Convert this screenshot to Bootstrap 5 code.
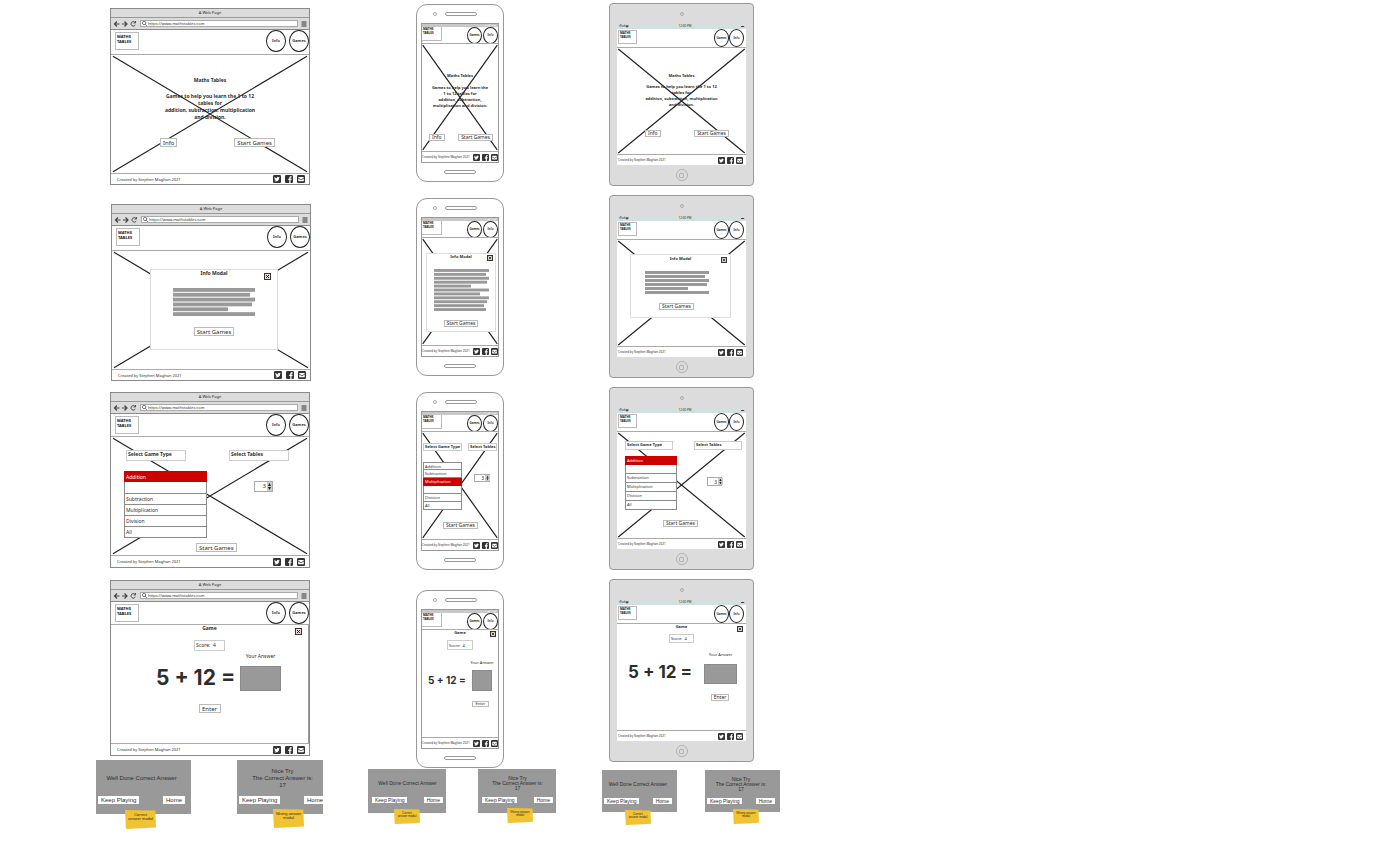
<!DOCTYPE html>
<html lang="en">
<head>
<meta charset="utf-8">
<meta name="viewport" content="width=device-width, initial-scale=1">
<title>Maths Tables wireframes</title>
<link rel="stylesheet" href="https://cdn.jsdelivr.net/npm/bootstrap@5.3.0/dist/css/bootstrap.min.css">
<style>
  body { font-family: "Noto Sans", "Liberation Sans", sans-serif; color: #2d2d2d; background: #fff; }
  .board { padding-left: 96px; gap: 45px; }
  .lane { flex: none; }
  .lane-web { width: 227px; padding-top: 8px; }
  .lane-phone { width: 188px; padding-top: 4px; }
  .lane-tablet { width: 179px; padding: 3px 0 0 1px; }

  /* Sizes shared by the parts of one device */
  .lane-web { --fs-btn: 6px; --fs-text: 5px; --lh: 7px; --fs-foot: 4px; --btn-h: 9px; --icon: 8px; --fs-msg: 6px; }
  .lane-phone { --fs-btn: 5px; --fs-text: 4px; --lh: 6px; --fs-foot: 3px; --btn-h: 7px; --icon: 7px; --fs-msg: 5px; }
  .lane-tablet { --fs-btn: 5px; --fs-text: 4px; --lh: 6px; --fs-foot: 3px; --btn-h: 7px; --icon: 7px; --fs-msg: 5px; }

  /* Device frames */
  .frame-web { width: 200px; margin-left: 14px; border: 1px solid #8a8a8a; }
  .frame-web + .frame-web { margin-top: 12px; }
  .frame-web.is-info { margin-top: 19px; margin-left: 15px; }
  .frame-web.is-pick { margin-top: 11px; }
  .frame-phone { width: 88px; margin-left: 48px; border: 1px solid #999; border-radius: 11px; padding: 0 4px; background: #fff; }
  .frame-phone + .frame-phone { margin-top: 16px; }
  .frame-phone.is-play { margin-top: 20px; }
  .frame-tablet { width: 145px; margin-left: 7px; border: 1px solid #999; border-radius: 4px; padding: 0 7px; background: #dcdcdc; }
  .frame-tablet + .frame-tablet { margin-top: 9px; }
  .bezel { height: 18px; gap: 8px; }
  .frame-tablet .bezel { height: 20px; }
  .cam { width: 4px; height: 4px; border: 1px solid #aaa; border-radius: 50%; }
  .slot { width: 32px; height: 4px; border: 1px solid #999; border-radius: 2px; }
  .frame-phone .bezel-top { padding-left: 12px; }
  .home-key { width: 12px; height: 12px; border: 1px solid #b4b4b4; border-radius: 50%; }
  .home-key i { width: 5px; height: 5px; border: 1px solid #b4b4b4; border-radius: 1px; }
  .frame-phone .view { border: 1px solid #999; }
  .title-strip { height: 9px; background: #dcdcdc; border-bottom: 1px solid #999; font-size: 4px; line-height: 8px; }
  .tool-strip { height: 12px; background: #dcdcdc; border-bottom: 1px solid #8a8a8a; padding: 0 2px; gap: 3px; }
  .address { height: 7px; border: 1px solid #aaa; background: #fff; gap: 1px; padding-left: 1px; min-width: 0; }
  .address input { border: 0; padding: 0; width: 100%; font-size: 4px; line-height: 5px; height: 5px; color: inherit; background: none; }
  .frame-phone .status { height: 3px; background: #c8c8c8; color: #fff; font-size: 2px; line-height: 3px; padding-right: 2px; }
  .frame-tablet .status { height: 5px; background: #d5dfe2; font-size: 3px; line-height: 5px; padding: 0 2px; }

  .page { background: #fff; }
  .top-row { height: 24px; padding: 2px 0 0 4px; }
  .is-pick .top-row, .is-play .top-row { height: 22px; }
  .frame-phone .top-row.top-row { height: 16px; padding: 0; }
  .frame-tablet .top-row.top-row { height: 18px; padding: 1px 2px 0 1px; }
  .brand-box { width: 24px; height: 18px; border: 1px solid #bbb; padding: 1px; font-size: 4px; line-height: 5px; font-weight: 700; color: #111; text-decoration: none; }
  .frame-phone .brand-box { width: 20px; height: 14px; border-width: 0 1px 1px 0; font-size: 3px; line-height: 4px; padding: 0 1px; }
  .frame-tablet .brand-box { width: 19px; height: 14px; font-size: 3px; line-height: 4px; padding: 0 1px; }
  .round-links { gap: 3px; }
  .frame-phone .round-links { gap: 1px; }
  .frame-tablet .round-links { gap: 0; }
  .round-link { width: 20px; height: 22px; margin-top: -2px; border: 1px solid #222; border-radius: 50%; background: #fff; color: #111; font-size: 4px; font-weight: 600; text-decoration: none; }
  .frame-phone .round-link { width: 15px; height: 17px; margin-top: 0; font-size: 3px; }
  .frame-tablet .round-link { width: 15px; height: 18px; margin-top: -1px; font-size: 3px; }

  .stage { height: 120px; border: solid #aaa; border-width: 1px 0; }
  .frame-phone .stage { height: 109px; }
  .frame-tablet .stage { height: 108px; }
  .cross { inset: 0; pointer-events: none; }
  .over { position: relative; }
  .copy, .heading { font-size: var(--fs-text); line-height: var(--lh); font-weight: 700; text-align: center; margin: 0; }
  .wf-btn { height: var(--btn-h); padding: 0 2px; border: 1px solid #bbb; border-radius: 0; background: #fff; color: #2d2d2d; font-size: var(--fs-btn); line-height: 1; white-space: nowrap; display: flex; align-items: center; justify-content: center; }
  .foot-row { height: 10px; padding: 0 4px 0 6px; font-size: var(--fs-foot); line-height: 5px; }
  .frame-web.is-pick .foot-row, .frame-web.is-play .foot-row { height: 11px; }
  .frame-phone .foot-row { padding: 0; white-space: nowrap; }
  .foot-links { gap: 4px; }
  .frame-phone .foot-links, .frame-tablet .foot-links { gap: 2px; }
  .frame-tablet .foot-row { padding: 0 3px 0 1px; }
  .foot-links a { color: #333; display: flex; }
  .foot-links svg { width: var(--icon); height: var(--icon); }

  /* Home */
  .is-home h2 { padding-top: 22px; }
  .is-home p { margin-top: 9px; }
  .choices { margin-top: 17px; padding: 0 34px 0 49px; }
  .lane-phone .is-home h2 { padding-top: 29px; }
  .lane-phone .is-home p { margin-top: 6px; }
  .lane-phone .choices { margin-top: 25px; padding: 0 5px 0 7px; }
  .lane-tablet .is-home h2 { padding-top: 25px; }
  .lane-tablet .is-home p { margin-top: 5px; }
  .lane-tablet .choices { margin-top: 22px; padding: 0 17px 0 28px; }

  /* Info dialog */
  .dialog { margin: 18px 0 0 38px; width: 128px; height: 81px; border: 1px solid #ddd; background: #fff; gap: 11px; }
  .lane-phone .dialog { margin: 15px 0 0 4px; width: 70px; height: 79px; gap: 9px; }
  .lane-tablet .dialog { margin: 14px 0 0 13px; width: 101px; height: 64px; gap: 9px; padding-top: 1px; }
  .text-lines { width: 82px; height: 28px; }
  .lane-phone .text-lines { width: 55px; height: 42px; }
  .lane-tablet .text-lines { width: 64px; height: 23px; margin-left: -8px; }
  .lane-tablet .dialog .wf-btn { margin-left: -8px; }
  .close-key { position: absolute; top: 3px; right: 6px; width: 7px; height: 7px; padding: 0; border: 1px solid #333; background: #f1dcdc; display: flex; }
  .close-key svg { width: 5px; height: 5px; }
  .lane-phone .close-key { top: 1px; right: 2px; width: 6px; height: 6px; background: #e6d9c4; }
  .lane-tablet .close-key { top: 2px; right: 3px; width: 6px; height: 6px; background: #d8dde6; }
  .lane-phone .close-key svg, .lane-tablet .close-key svg { width: 4px; height: 4px; }

  /* Game picker */
  .picker { padding: 13px 20px 0 13px; }
  .pick-label { width: 60px; height: 11px; border: 1px solid #ccc; background: #fff; padding-left: 1px; font-size: var(--fs-text); line-height: 7px; font-weight: 700; white-space: nowrap; }
  .kinds { width: 83px; margin-top: 10px; border-radius: 0; font-size: var(--fs-text); }
  .kinds .list-group-item { height: 11px; padding: 0 1px; border: 1px solid #8a8a8a; border-top: 0; line-height: 10px; color: #2d2d2d; background: #fff; font-size: var(--fs-text); text-align: left; }
  .kinds .list-group-item:first-child { border-top: 1px solid #8a8a8a; }
  .kinds .list-group-item.active { background: #c00; border-color: #c00; color: #fff; margin: 0; }
  .kinds .list-group-item.spacer { height: 12px; }
  .type-col .pick-label { margin-left: 2px; }
  .stepper { width: 19px; height: 11px; border: 1px solid #aaa; background: #fff; margin: 20px 0 0 25px; }
  .stepper input { width: 12px; padding: 0 1px; border: 0; background: none; font-size: 6px; line-height: 9px; text-align: right; color: inherit; }
  .stepper button { width: 5px; border: 0; padding: 0; background: #ccc; display: flex; }
  .stepper svg { width: 5px; height: 100%; }
  .pick-start { margin: 5px auto 0 85px; }
  .lane-phone .picker { padding: 11px 1px 0 1px; }
  .lane-phone .pick-label { width: 39px; height: 8px; line-height: 6px; }
  .lane-phone .table-col .pick-label { width: 29px; }
  .lane-phone .kinds { width: 39px; margin-top: 11px; }
  .lane-phone .kinds .list-group-item.list-group-item { height: 8px; line-height: 7px; }
  .lane-phone .type-col .pick-label, .lane-tablet .type-col .pick-label { margin-left: 0; }
  .lane-phone .stepper { width: 16px; height: 8px; margin: 23px 0 0 6px; }
  .lane-phone .stepper input, .lane-tablet .stepper input { font-size: 5px; line-height: 6px; width: 10px; }
  .lane-phone .pick-start { margin: 12px auto 0 21px; }
  .lane-tablet .picker { padding: 9px 4px 0 8px; }
  .lane-tablet .pick-label { width: 48px; height: 9px; line-height: 6px; }
  .lane-tablet .kinds { width: 52px; margin-top: 6px; }
  .lane-tablet .kinds .list-group-item.list-group-item { height: 9px; line-height: 8px; }
  .lane-tablet .stepper { width: 15px; height: 9px; margin: 27px 0 0 13px; }
  .lane-tablet .pick-start { margin: 10px auto 0 46px; }

  /* Play */
  .score { width: 31px; height: 11px; margin: 8px auto 0; border: 1px solid #ccc; padding-left: 1px; font-size: var(--fs-text); line-height: 9px; white-space: pre; }
  .sum-row { margin-top: 2px; padding: 0 27px 0 45px; }
  .sum { font-family: Inter, sans-serif; font-size: 21px; line-height: 26px; font-weight: 700; white-space: nowrap; }
  .answer-col { gap: 6px; width: 41px; }
  .answer-col label { font-size: var(--fs-text); line-height: var(--lh); white-space: nowrap; }
  .answer-col input { width: 100%; height: 25px; border: 1px solid #8a8a8a; background: #999; border-radius: 0; padding: 2px; }
  .enter { margin: 13px auto 0; width: 22px; }
  .frame-web.is-play .stage { border-right: 1px solid #999; }
  .lane-phone .score { width: 26px; height: 10px; margin-top: 4px; }
  .lane-phone .sum-row { margin-top: 10px; padding: 0 6px 0 6px; }
  .lane-phone .sum { font-size: 10px; line-height: 22px; }
  .lane-phone .answer-col { gap: 4px; width: 20px; }
  .lane-phone .answer-col input { height: 21px; }
  .lane-phone .enter { margin: 10px 9px 0 auto; width: 17px; height: 6px; font-size: 4px; }
  .lane-tablet .score { width: 25px; height: 9px; margin-top: 4px; line-height: 7px; }
  .lane-tablet .sum-row { margin-top: 9px; padding: 0 9px 0 11px; }
  .lane-tablet .sum { font-size: 17px; line-height: 24px; }
  .lane-tablet .answer-col { width: 33px; }
  .lane-tablet .answer-col input { height: 20px; }
  .lane-tablet .enter { margin: 10px 17px 0 auto; width: 18px; }

  /* Result dialogs and their sticky notes */
  .results { margin-top: 4px; font-family: "Liberation Sans", sans-serif; }
  .lane-phone .results { margin-top: 1px; }
  .lane-tablet .results { margin-top: 8px; }
  .result { width: 95px; }
  .result-clip { height: 54px; overflow: hidden; }
  .result-body { width: 95px; height: 54px; padding: 1px 6px 10px 2px; background: #999; }
  .lane-web .result:last-child { width: 86px; }
  .result-text { font-size: var(--fs-msg); line-height: var(--lh); margin: 0; color: #2d2d2d; }
  .result-body .wf-btn { border: 0; height: 8px; padding: 0 3px; }
  .lane-phone .result, .lane-phone .result-body { width: 78px; }
  .lane-phone .result-clip, .lane-phone .result-body { height: 44px; }
  .lane-phone .result-body { padding: 1px 3px 10px 4px; }
  .lane-tablet .result, .lane-tablet .result-body { width: 75px; }
  .lane-tablet .result-clip, .lane-tablet .result-body { height: 42px; }
  .lane-tablet .result-body { padding: 1px 5px 8px 2px; }
  .lane-phone .result-body .wf-btn, .lane-tablet .result-body .wf-btn { height: 6px; }
  .lane-phone .result-text, .lane-tablet .result-text { line-height: 5px; }
  .sticky { position: relative; width: 31px; height: 19px; margin: -4px 0 0 29px; padding-top: 3px; background: #f1c232; font-size: 4px; line-height: 4px; text-align: center; clip-path: polygon(0 0, 98% 3%, 100% 92%, 52% 96%, 3% 100%); }
  .result:last-child .sticky { margin-left: 36px; margin-top: -5px; }
  .lane-phone .sticky, .lane-tablet .sticky { width: 26px; height: 15px; font-size: 3px; line-height: 3px; }
  .lane-phone .sticky { margin-left: 26px; }
  .lane-tablet .sticky { margin: -2px 0 0 23px; }
  .lane-phone .result:last-child .sticky { margin-left: 29px; }
  .lane-tablet .result:last-child .sticky { margin: -3px 0 0 28px; }
</style>
</head>
<body>
<svg class="d-none" aria-hidden="true">
  <symbol id="i-twitter" viewBox="0 0 16 16"><rect width="16" height="16" rx="2.5" fill="#333"/><path fill="#fff" d="M13.500 4.600c-.4.2-.8.3-1.300.4.5-.3.8-.7 1-1.200-.4.3-.9.5-1.500.6A2.300 2.300 0 0 0 7.800 6.500 6.500 6.500 0 0 1 3.100 4.100a2.300 2.300 0 0 0 .7 3c-.4 0-.7-.1-1-.3 0 1.100.8 2 1.800 2.300-.3.1-.7.1-1 0 .3.9 1.100 1.600 2.100 1.600A4.600 4.600 0 0 1 2.300 11.700a6.500 6.500 0 0 0 10-5.800c.5-.3.9-.8 1.200-1.300z"/></symbol>
  <symbol id="i-facebook" viewBox="0 0 16 16"><rect width="16" height="16" rx="2.500" fill="#333"/><path fill="#fff" d="M8.500 16V10H6.500V7.500h2V5.800C8.500 3.700 9.700 2.600 11.700 2.600c.8 0 1.600.1 1.600.1v2.100h-1c-1 0-1.200.5-1.200 1.200v1.500h2.200L12.900 10h-1.800v6z"/></symbol>
  <symbol id="i-mail" viewBox="0 0 16 16"><rect width="16" height="16" rx="2.500" fill="#333"/><path fill="#fff" d="M3.500 4h9a1 1 0 0 1 1 1v.6L8 9.200 2.500 5.600V5a1 1 0 0 1 1-1zM2.500 7 8 10.600 13.500 7v4.500a1 1 0 0 1-1 1h-9a1 1 0 0 1-1-1z"/></symbol>
  <symbol id="i-nav" viewBox="0 0 24 8"><g fill="none" stroke="#444" stroke-width="1.2"><path d="M6.500 4H2M4 1.500 1.500 4 4 6.500M9 4h4.500M11.500 1.500 14 4 11.500 6.500"/><path d="M22 2.300A2.300 2.300 0 1 0 22.300 5M22.500 1v2h-2" stroke-width=".9"/></g></symbol>
  <symbol id="i-search" viewBox="0 0 10 10"><path d="M6.500 6.500 9.500 9.500M7.500 4a3.300 3.300 0 1 1-6.600 0 3.300 3.300 0 0 1 6.600 0z" fill="none" stroke="#444" stroke-width="1.400"/></symbol>
  <symbol id="i-menu" viewBox="0 0 6 6"><path d="M.5 1h5M.5 3h5M.5 5h5" stroke="#333"/></symbol>
  <symbol id="i-close" viewBox="0 0 5 5"><path d="m1 1 3 3M4 1 1 4" stroke="#222" stroke-width="1"/></symbol>
  <symbol id="i-wifi" viewBox="0 0 6 4"><path d="M0 1q3-2 6 0L3 4z" fill="#444"/></symbol>
  <symbol id="i-step" viewBox="0 0 5 9"><path d="M2.500 1 4 4H1zM2.500 8 4 5H1z" fill="#222"/></symbol>
</svg>

<main class="board d-flex align-items-start" id="board"></main>

<script src="https://cdn.jsdelivr.net/npm/bootstrap@5.3.0/dist/js/bootstrap.bundle.min.js"></script>
<script>
  const icon = (name, w, h) => `<svg width="${w}" height="${h}" class="flex-shrink-0" aria-hidden="true"><use href="#i-${name}"/></svg>`;
  const devices = {
    web: {
      links: ['Info', 'Games'], selected: 'Addition', lines: [82, 77, 82, 79, 55, 82], lineBox: [82, 28],
      intro: 'Games to help you learn the 1 to 12<br>tables for<br>addition, subtraction, multiplication<br>and division.',
      before: id => `<div class="title-strip text-center">A Web Page</div>
        <div class="tool-strip d-flex align-items-center">${icon('nav', 24, 8)}
          <div class="address d-flex align-items-center flex-grow-1">${icon('search', 5, 5)}<input id="${id}-url" aria-label="Address" value="https://www.mathstables.com"></div>${icon('menu', 6, 6)}</div>`,
      after: ''
    },
    phone: {
      links: ['Games', 'Info'], selected: 'Multiplication', lines: [55, 52, 55, 53, 37, 55, 46, 55, 53, 50, 52], lineBox: [55, 42],
      intro: 'Games to help you learn the<br>1 to 12 tables for<br>addition, subtraction,<br>multiplication and division.',
      before: () => `<div class="bezel bezel-top d-flex align-items-center"><span class="cam"></span><span class="slot"></span></div><div class="view"><div class="status text-end">▾ ◢ ▮ 12:30</div>`,
      after: `</div><div class="bezel d-flex align-items-center justify-content-center"><span class="slot"></span></div>`
    },
    tablet: {
      links: ['Games', 'Info'], selected: 'Addition', lines: [64, 60, 64, 62, 43, 64], lineBox: [64, 23],
      intro: 'Games to help you learn the 1 to 12<br>tables for<br>addition, subtraction, multiplication<br>and division.',
      before: () => `<div class="bezel d-flex align-items-center justify-content-center"><span class="cam"></span></div><div class="status d-flex justify-content-between align-items-center"><span class="d-flex align-items-center">iPad ${icon('wifi', 4, 3)}</span><span>12:00 PM</span><span>▬</span></div>`,
      after: `<div class="bezel d-flex align-items-center justify-content-center"><span class="home-key d-flex align-items-center justify-content-center"><i></i></span></div>`
    }
  };
  const cross = `<svg class="cross position-absolute w-100 h-100" viewBox="0 0 100 100" preserveAspectRatio="none" aria-hidden="true"><path d="M1 1 99 99M99 1 1 99" stroke="#222" stroke-width="1.2" vector-effect="non-scaling-stroke"/></svg>`;
  const close = `<button type="button" class="close-key" aria-label="Close">${icon('close', 5, 5)}</button>`;
  const button = (text, cls = '') => `<button type="button" class="btn wf-btn ${cls}">${text}</button>`;

  const screens = {
    home: d => `<h2 class="copy">Maths Tables</h2><p class="copy">${d.intro}</p>${cross}
      <div class="over choices d-flex justify-content-between">${button('Info')}${button('Start Games')}</div>`,
    info: d => {
      const [w, h] = d.lineBox, step = (h + 1) / d.lines.length;
      const bars = d.lines.map((n, i) => `<rect y="${i * step}" width="${n}" height="${step - 1}"/>`).join('');
      return `${cross}<div class="over dialog d-flex flex-column align-items-center"><h2 class="heading">Info Modal</h2>${close}
        <svg class="text-lines flex-shrink-0" viewBox="0 0 ${w} ${h}" fill="#999" aria-hidden="true">${bars}</svg>${button('Start Games')}</div>`;
    },
    pick: (d, id) => {
      const rows = ['Addition', 'Subtraction', 'Multiplication', 'Division', 'All'].map(t => t === d.selected
        ? `<button type="button" class="list-group-item active">${t}</button><div class="list-group-item spacer"></div>`
        : `<button type="button" class="list-group-item">${t}</button>`).join('');
      return `${cross}<div class="over picker w-100 d-flex justify-content-between align-items-start">
        <div class="type-col"><div class="pick-label">Select Game Type</div><div class="list-group kinds">${rows}</div></div>
        <div class="table-col"><label class="pick-label d-block" for="${id}-n">Select Tables</label>
          <div class="stepper d-flex justify-content-between"><input id="${id}-n" value="3"><button type="button" aria-label="Change table">${icon('step', 5, 9)}</button></div></div>
        </div>${button('Start Games', 'over pick-start')}`;
    },
    play: (d, id) => `<h2 class="heading">Game</h2>${close}<div class="score">Score:  4</div>
      <div class="sum-row d-flex justify-content-between align-items-end"><div class="sum">5 + 12 =</div>
        <div class="answer-col d-flex flex-column align-items-center"><label for="${id}-a">Your Answer</label><input id="${id}-a"></div></div>
      ${button('Enter', 'enter')}`
  };

  const frame = (key, name) => {
    const d = devices[key], id = `${key}-${name}`;
    return `<article class="frame-${key} is-${name}">${d.before(id)}<div class="page">
      <header class="top-row d-flex justify-content-between align-items-start"><a class="brand-box" href="#">MATHS<br>TABLES</a>
        <nav class="round-links d-flex">${d.links.map(t => `<a class="round-link d-flex align-items-center justify-content-center" href="#">${t}</a>`).join('')}</nav></header>
      <div class="stage position-relative d-flex flex-column">${screens[name](d, id)}</div>
      <footer class="foot-row d-flex justify-content-between align-items-center"><span>Created by Stephen Maghan 2021</span>
        <span class="foot-links d-flex">${['twitter', 'facebook', 'mail'].map(n => `<a href="#" aria-label="${n}">${icon(n, 8, 8)}</a>`).join('')}</span></footer>
      </div>${d.after}</article>`;
  };
  const result = (text, note) => `<div class="result"><div class="result-clip"><div class="result-body d-flex flex-column">
      <div class="flex-grow-1 d-flex align-items-center justify-content-center text-center"><p class="result-text">${text}</p></div>
      <div class="d-flex justify-content-between">${button('Keep Playing')}${button('Home')}</div></div></div><div class="sticky">${note}</div></div>`;

  document.getElementById('board').innerHTML = Object.keys(devices).map(key =>
    `<section class="lane lane-${key}">${Object.keys(screens).map(name => frame(key, name)).join('')}
      <div class="results d-flex justify-content-between">${result('Well Done Correct Answer', 'Correct<br>answer modal')}${result('Nice Try<br>The Correct Answer is:<br>17', 'Wrong answer<br>modal')}</div></section>`).join('');
</script>
</body>
</html>
